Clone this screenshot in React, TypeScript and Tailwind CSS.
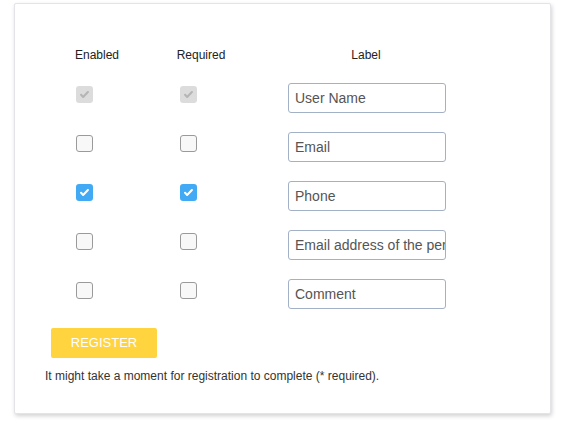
import React from "react";

const ROWS = [
  { enabled: true, required: true, disabled: true, label: "User Name" },
  { enabled: false, required: false, disabled: false, label: "Email" },
  { enabled: true, required: true, disabled: false, label: "Phone" },
  { enabled: false, required: false, disabled: false, label: "Email address of the person" },
  { enabled: false, required: false, disabled: false, label: "Comment" },
];

function Check({ checked, disabled }: { checked: boolean; disabled: boolean }) {
  if (disabled) {
    return (
      <span className="flex h-[17px] w-[17px] items-center justify-center rounded-[3px] bg-[#dcdcdc]">
        <svg viewBox="0 0 16 16" className="h-[11px] w-[11px]" fill="none">
          <path d="M3 8.5l3 3 7-7" stroke="#b5b5b5" strokeWidth="3" strokeLinecap="round" strokeLinejoin="round" />
        </svg>
      </span>
    );
  }
  if (checked) {
    return (
      <span className="flex h-[17px] w-[17px] items-center justify-center rounded-[3px] bg-[#42aaf4]">
        <svg viewBox="0 0 16 16" className="h-[11px] w-[11px]" fill="none">
          <path d="M3 8.5l3 3 7-7" stroke="#ffffff" strokeWidth="3" strokeLinecap="round" strokeLinejoin="round" />
        </svg>
      </span>
    );
  }
  return <span className="block h-[17px] w-[17px] rounded-[3px] border border-[#9a9a9a] bg-[#f8f8f8]" />;
}

export default function App() {
  return (
    <div className="min-h-[426px] bg-white pt-[3px] pl-[14px]" style={{ fontFamily: '"Liberation Sans", Arial, sans-serif' }}>
      <div className="h-[411px] w-[537px] rounded-[2px] border border-[#e4e4e8] bg-white pt-[44px] shadow-[1px_2px_4px_rgba(0,0,0,0.18)]">
        {/* Header */}
        <div className="flex pl-[40px] text-[12px] leading-[14px] text-[#222]">
          <div className="w-[84px] text-center">Enabled</div>
          <div className="w-[124px] text-center">Required</div>
          <div className="w-[206px] text-center">Label</div>
        </div>

        {/* Rows */}
        <div className="mt-[21px] flex flex-col gap-[19px] pl-[40px]">
          {ROWS.map((row) => (
            <div key={row.label} className="flex items-start">
              <div className="w-[84px] pl-[21px] pt-[3px]">
                <Check checked={row.enabled} disabled={row.disabled} />
              </div>
              <div className="w-[124px] pl-[41px] pt-[3px]">
                <Check checked={row.required} disabled={row.disabled} />
              </div>
              <div className="w-[206px] pl-[25px]">
                <input
                  readOnly
                  value={row.label}
                  className="h-[30px] w-[158px] rounded-[3px] border border-[#a3b1c6] bg-white pl-[6px] text-[14px] text-[#555] outline-none"
                />
              </div>
            </div>
          ))}
        </div>

        <div className="mt-[19px] pl-[36px]">
          <button className="h-[30px] w-[106px] rounded-[2px] bg-[#ffd43f] text-[13px] text-white">REGISTER</button>
        </div>
        <p className="mt-[11px] pl-[30px] text-[12px] leading-[14px] text-[#333]">
          It might take a moment for registration to complete (* required).
        </p>
      </div>
    </div>
  );
}
